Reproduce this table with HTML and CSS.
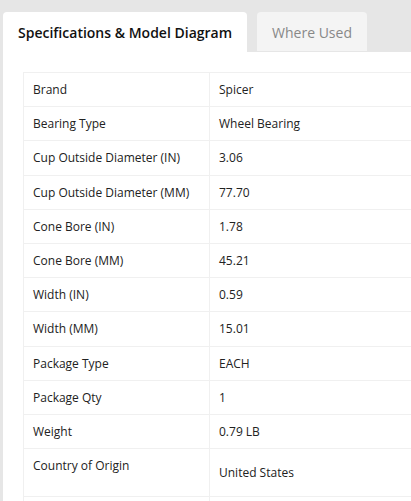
FILE: index.html
```html
<!DOCTYPE html>
<html>
<head>
<meta charset="utf-8">
<link rel="stylesheet" href="styles.css">
</head>
<body>
<div class="wrap">
  <div class="tabs">
    <div class="tab active">Specifications &amp; Model Diagram</div>
    <div class="tab">Where Used</div>
  </div>
  <div class="panel">
    <table class="specs">
      <tr><td>Brand</td><td>Spicer</td></tr>
      <tr><td>Bearing Type</td><td>Wheel Bearing</td></tr>
      <tr><td>Cup Outside Diameter (IN)</td><td>3.06</td></tr>
      <tr><td>Cup Outside Diameter (MM)</td><td>77.70</td></tr>
      <tr><td>Cone Bore (IN)</td><td>1.78</td></tr>
      <tr><td>Cone Bore (MM)</td><td>45.21</td></tr>
      <tr><td>Width (IN)</td><td>0.59</td></tr>
      <tr><td>Width (MM)</td><td>15.01</td></tr>
      <tr><td>Package Type</td><td>EACH</td></tr>
      <tr><td>Package Qty</td><td>1</td></tr>
      <tr><td>Weight</td><td>0.79 LB</td></tr>
      <tr class="tall"><td>Country of Origin</td><td>United States</td></tr>
      <tr><td>&nbsp;</td><td>&nbsp;</td></tr>
    </table>
  </div>
</div>
</body>
</html>
```

FILE: styles.css
```css
html, body {
  margin: 0;
  padding: 0;
  background: #e6e6e6;
  font-family: "Open Sans", "Liberation Sans", sans-serif;
  color: #222;
  overflow: hidden;
  height: 501px;
}
.wrap {
  padding: 12px 0 0 3px;
  overflow: hidden;
  height: 489px;
}
.tabs {
  display: flex;
  gap: 10px;
  height: 40px;
  white-space: nowrap;
}
.tab {
  flex: none;
  height: 39px;
  border-radius: 4px 4px 0 0;
  background: #f4f4f4;
  color: #888;
  font-size: 14px;
  line-height: 41px;
  width: 110px;
  text-align: center;
}
.tab.active {
  height: 40px;
  width: 229px;
  padding-left: 15px;
  background: #fff;
  color: #111;
  font-weight: 600;
  text-align: left;
}
.panel {
  background: #fff;
  padding: 20px 0 0 20px;
  height: 429px;
  overflow: hidden;
}
.specs {
  border-collapse: collapse;
  table-layout: fixed;
  width: 420px;
  font-size: 12px;
  white-space: nowrap;
}
.specs td {
  border: 1px solid #f0f0f0;
  height: 34.2px;
  padding: 0 9px;
  box-sizing: border-box;
  vertical-align: middle;
  overflow: hidden;
}
.specs td:first-child {
  width: 186px;
}
.specs tr.tall td {
  height: 48px;
}
.specs tr.tall td:first-child {
  vertical-align: top;
  padding-top: 8px;
}
```
